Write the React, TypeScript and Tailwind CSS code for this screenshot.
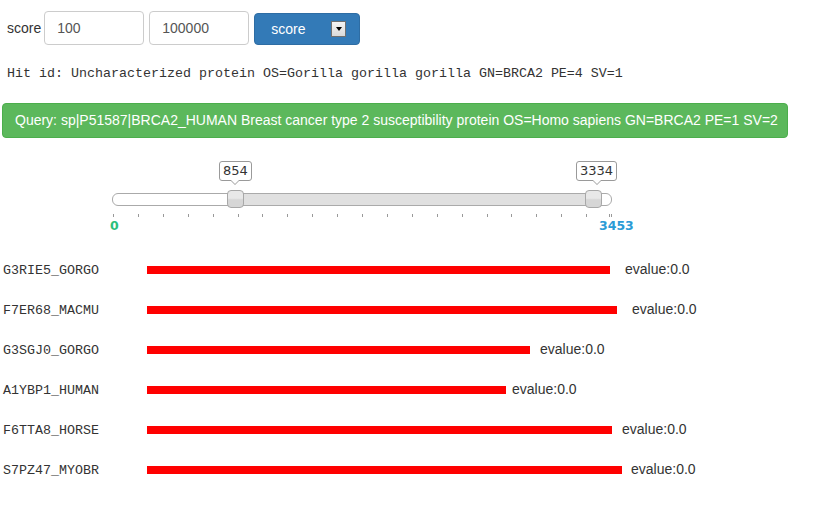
import React from "react";

const rows = [
  { id: "G3RIE5_GORGO", w: 463, gap: 15 },
  { id: "F7ER68_MACMU", w: 470, gap: 15 },
  { id: "G3SGJ0_GORGO", w: 383, gap: 10 },
  { id: "A1YBP1_HUMAN", w: 359, gap: 6 },
  { id: "F6TTA8_HORSE", w: 465, gap: 10 },
  { id: "S7PZ47_MYOBR", w: 475, gap: 9 },
];

const ticks = Array.from({ length: 21 }, (_, i) => i);

function Tip({ label }: { label: string }) {
  return (
    <div className="flex flex-col items-center">
      <div className="h-[20px] px-[3px] border border-[#9a9a9a] rounded-[3px] bg-white text-[13px] leading-[18px] text-[#333] font-['DejaVu_Sans',sans-serif]">
        {label}
      </div>
      <div className="relative w-[10px] h-[5px] -mt-px">
        <div className="absolute left-0 top-0 w-0 h-0 border-l-[5px] border-r-[5px] border-t-[5px] border-l-transparent border-r-transparent border-t-[#9a9a9a]" />
        <div className="absolute left-[1px] top-0 w-0 h-0 border-l-[4px] border-r-[4px] border-t-[4px] border-l-transparent border-r-transparent border-t-white" />
      </div>
    </div>
  );
}

function Handle() {
  return (
    <div className="w-[17px] h-[18px] rounded-[4px] border border-[#a8a8a8] bg-[linear-gradient(#e8e8e8_0%,#e8e8e8_45%,#d6d6d6_55%,#d6d6d6_100%)]" />
  );
}

export default function App() {
  return (
    <div className="w-[816px] h-[505px] bg-white font-['Liberation_Sans',Arial,sans-serif] text-[#333] overflow-hidden">
      {/* top form */}
      <div className="flex items-start pt-[11px] pl-[7px]">
        <span className="text-[14px] leading-[34px] mr-[3px]">score</span>
        <input
          className="w-[100px] h-[34px] border border-[#ccc] rounded-[4px] pl-[12px] text-[14px] text-[#555] outline-none"
          defaultValue="100"
        />
        <input
          className="ml-[5px] w-[100px] h-[34px] border border-[#ccc] rounded-[4px] pl-[12px] text-[14px] text-[#555] outline-none"
          defaultValue="100000"
        />
        <div className="ml-[5px] mt-[2px] w-[106px] h-[32px] rounded-[4px] bg-[#337ab7] border border-[#2e6da4] flex items-center pl-[16px] pr-[13px]">
          <span className="text-white text-[14px]">score</span>
          <span className="ml-auto w-[15px] h-[16px] border border-[#707070] bg-[linear-gradient(#f4f4f4,#dadada)] flex items-center justify-center">
            <span className="w-0 h-0 border-l-[3.5px] border-r-[3.5px] border-t-[4px] border-l-transparent border-r-transparent border-t-black" />
          </span>
        </div>
      </div>

      {/* hit id */}
      <div className="mt-[21px] pl-[7px] font-['Liberation_Mono',monospace] text-[13.33px] leading-[15px] text-[#333] whitespace-nowrap">
        Hit id: Uncharacterized protein OS=Gorilla gorilla gorilla GN=BRCA2 PE=4 SV=1
      </div>

      {/* query */}
      <div className="mt-[22px] ml-[2px] w-[786px] h-[35px] rounded-[4px] bg-[#5cb85c] border border-[#4cae4c] flex items-center pl-[12px] text-white text-[14px] whitespace-nowrap">
        Query: sp|P51587|BRCA2_HUMAN Breast cancer type 2 susceptibility protein OS=Homo sapiens GN=BRCA2 PE=1 SV=2
      </div>

      {/* slider */}
      <div className="ml-[112px] mt-[23px] w-[540px]">
        <div className="relative w-[500px] h-[46px]">
          {/* track */}
          <div className="absolute left-0 top-[32px] w-[500px] h-[13px] rounded-[6px] border border-[#aaa] bg-white overflow-hidden">
            <div className="absolute left-[124px] top-0 w-[358px] h-full bg-[#e0e0e0]" />
          </div>
          {/* tooltips */}
          <div className="absolute left-[107px] top-0">
            <Tip label="854" />
          </div>
          <div className="absolute left-[464px] top-0">
            <Tip label="3334" />
          </div>
          {/* handles */}
          <div className="absolute left-[115px] top-[29px]">
            <Handle />
          </div>
          <div className="absolute left-[473px] top-[29px]">
            <Handle />
          </div>
        </div>
        {/* ticks */}
        <div className="relative w-[500px] h-[5px] mt-[6px]">
          {ticks.map((i) => (
            <div
              key={i}
              className="absolute top-[1px] w-px h-[3px] bg-[#999]"
              style={{ left: 1 + i * 24.9 }}
            />
          ))}
          <div className="absolute top-[1px] left-[497px] w-px h-[3px] bg-[#999]" />
        </div>
        <div className="relative w-[540px] h-[16px] font-['DejaVu_Sans',sans-serif] font-bold text-[12.5px] leading-[16px]">
          <span className="absolute left-[-2px] top-0 text-[#2bc07c]">0</span>
          <span className="absolute left-[487px] top-0 text-[#2b9bd6]">3453</span>
        </div>
      </div>

      {/* hits */}
      <div className="mt-[28px] flex flex-col gap-[24px]">
        {rows.map((r) => (
          <div key={r.id} className="flex items-center h-[16px] pl-[3px]">
            <span className="w-[144px] font-['Liberation_Mono',monospace] text-[13.33px] text-[#333] leading-[16px] pt-[2px]">
              {r.id}
            </span>
            <div className="h-[8px] bg-[#ff0000]" style={{ width: r.w }} />
            <span className="text-[14px] text-[#333] leading-[16px] -mt-[2px]" style={{ marginLeft: r.gap }}>
              evalue:0.0
            </span>
          </div>
        ))}
      </div>
    </div>
  );
}
